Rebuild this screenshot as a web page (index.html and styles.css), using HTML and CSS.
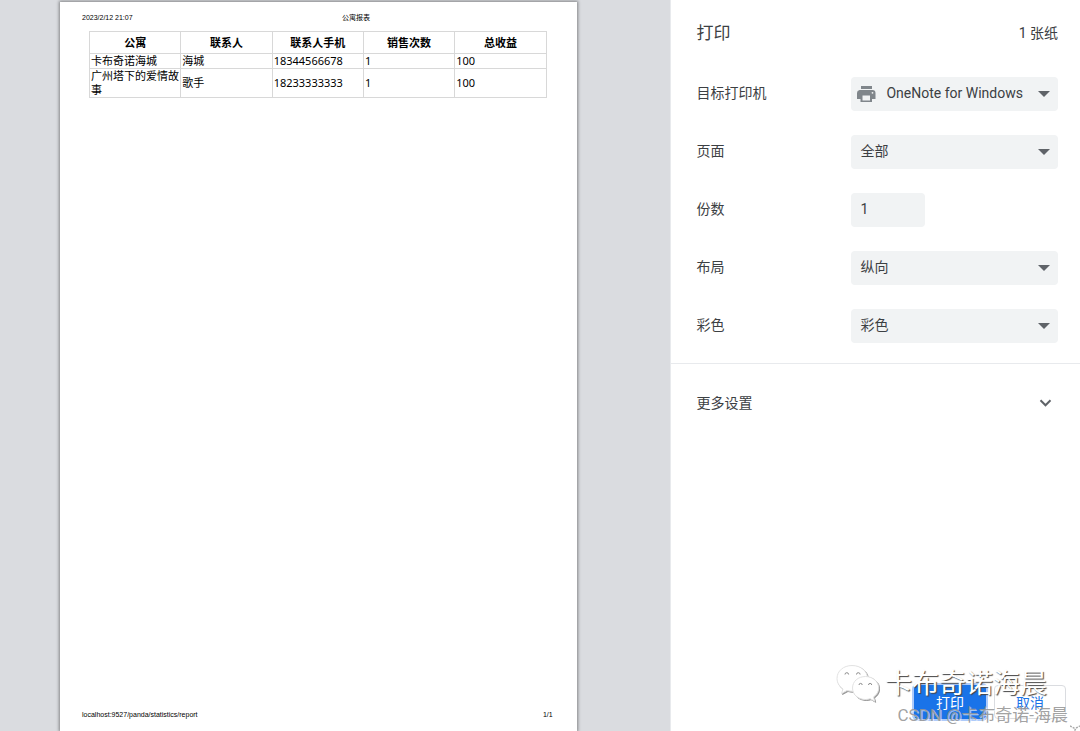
FILE: index.html
```html
<!DOCTYPE html>
<html lang="zh-CN">
<head>
  <meta charset="UTF-8" />
  <meta name="viewport" content="width=device-width, initial-scale=1.0" />
  <title>打印</title>
  <link rel="stylesheet" href="styles.css">
</head>
<body>
  <main class="preview">
    <div class="paper">
      <div class="paper-header">
        <span>2023/2/12 21:07</span>
        <span class="paper-title">公寓报表</span>
      </div>

      <div class="paper-body">
        <table class="report">
          <thead>
            <tr>
              <th>公寓</th>
              <th>联系人</th>
              <th>联系人手机</th>
              <th>销售次数</th>
              <th>总收益</th>
            </tr>
          </thead>
          <tbody>
            <tr>
              <td>卡布奇诺海城</td>
              <td>海城</td>
              <td>18344566678</td>
              <td>1</td>
              <td>100</td>
            </tr>
            <tr>
              <td>广州塔下的爱情故事</td>
              <td>歌手</td>
              <td>18233333333</td>
              <td>1</td>
              <td>100</td>
            </tr>
          </tbody>
        </table>
      </div>

      <div class="paper-footer">
        <span>localhost:9527/panda/statistics/report</span>
        <span>1/1</span>
      </div>
    </div>
  </main>

  <form class="panel">
    <div class="panel-header">
      <h1>打印</h1>
      <span class="sheets">1 张纸</span>
    </div>

    <div class="settings">
      <div class="row">
        <label for="printer">目标打印机</label>
        <div class="select-wrap with-icon">
          <svg class="printer-icon" viewBox="0 0 20 18" aria-hidden="true">
            <path d="M5 1h11v3H5zM3.500 5h13A3 3 0 0 1 19.500 8v6H16v3H4.500v-3H1V8a3 3 0 0 1 2.500-3z" fill="#80868b"/>
            <path d="M6.500 10.500h7.500v5H6.500z" fill="#f1f3f4"/>
            <circle cx="16.500" cy="7.800" r="0.900" fill="#f1f3f4"/>
          </svg>
          <select id="printer"><option>OneNote for Windows</option></select>
        </div>
      </div>
      <div class="row">
        <label for="pages">页面</label>
        <div class="select-wrap">
          <select id="pages"><option>全部</option></select>
        </div>
      </div>
      <div class="row">
        <label for="copies">份数</label>
        <div class="field">
          <input id="copies" type="text" inputmode="numeric" value="1">
        </div>
      </div>
      <div class="row">
        <label for="layout">布局</label>
        <div class="select-wrap">
          <select id="layout"><option>纵向</option><option>横向</option></select>
        </div>
      </div>
      <div class="row">
        <label for="color">彩色</label>
        <div class="select-wrap">
          <select id="color"><option>彩色</option><option>黑白</option></select>
        </div>
      </div>
    </div>

    <button type="button" class="more">
      <span>更多设置</span>
      <svg viewBox="0 0 12 8" aria-hidden="true"><path d="M1 1.300l5 5 5-5" fill="none" stroke="#5f6368" stroke-width="2"/></svg>
    </button>

    <div class="actions">
      <button type="submit" class="btn btn-print">打印</button>
      <button type="button" class="btn btn-cancel">取消</button>
    </div>

    <div class="watermark">
      <svg class="wechat" viewBox="0 0 44 40" aria-hidden="true">
        <g fill="#fff" stroke="#e2e2e2" stroke-width="1">
          <path class="bubble" d="M16 1.500C7.500 1.500 1 7 1 14.500c0 4.500 2.500 8 6 10.500l-1.500 4.500 5.500-3c2 .6 4 .8 6 .8 8 0 14.500-5.500 14.500-12.800S25 1.500 16 1.500z"/>
          <path class="bubble" d="M29.500 12.500c-7.500 0-13 5-13 11.500s5.500 11.500 13 11.500c1.600 0 3.200-.3 4.600-.8l4.600 2.600-1.200-4.300c3.200-2.200 5.200-5.300 5.200-9 0-6.500-6-11.500-13.200-11.500z"/>
        </g>
        <path d="M9 10.500a1.800 1.800 0 0 1 3.600 0M20.500 10.500a1.800 1.800 0 0 1 3.600 0M23 21a1.600 1.600 0 0 1 3.200 0M32.500 21a1.600 1.600 0 0 1 3.200 0" fill="none" stroke="#8c8c8c"/>
      </svg>
      <span>卡布奇诺海晨</span>
    </div>
    <div class="csdn">CSDN @卡布奇诺-海晨</div>
    <svg class="corner" viewBox="0 0 10 6" aria-hidden="true"><path d="M0 1l4 2 1 2 1-2 4-2" fill="none" stroke="#aaa" stroke-width="1.500" stroke-dasharray="2 1"/></svg>
  </form>
</body>
</html>
```

FILE: styles.css
```css
* {
  box-sizing: border-box;
}

body {
  margin: 0;
  display: flex;
  min-height: 100vh;
  font-family: Roboto, "Noto Sans CJK SC", sans-serif;
  font-size: 14px;
  color: #3c4043;
  background: #fff;
}

/* preview */
.preview {
  flex: 1;
  display: flex;
  padding: 2px 93px 0 60px;
  background: #dadce0;
}

.paper {
  flex: 1;
  display: flex;
  flex-direction: column;
  padding: 11px 0 11px;
  background: #fff;
  box-shadow: 0 0 3px 1px rgba(0, 0, 0, 0.4);
  color: #000;
}

.paper-header,
.paper-footer {
  display: flex;
  padding-left: 22px;
  font-family: "Liberation Sans", "Noto Sans CJK SC", sans-serif;
  font-size: 7px;
  line-height: 10px;
}

.paper-title {
  flex: 1;
  padding-left: 3px;
  text-align: center;
}

.paper-body {
  padding: 8px 30px 0 29px;
}

.paper-footer {
  justify-content: space-between;
  margin-top: auto;
  padding-right: 24px;
}

.report {
  width: 100%;
  border-collapse: collapse;
  table-layout: fixed;
  font-family: "Noto Sans", "Noto Sans CJK SC", sans-serif;
  font-size: 11px;
  line-height: 14px;
}

.report th,
.report td {
  border: 1px solid #d8d8d8;
  padding: 0 0 0 1px;
  text-align: left;
}

.report th {
  padding: 4px 0 3px;
  text-align: center;
}

/* settings panel */
.panel {
  position: relative;
  width: 38%;
  display: flex;
  flex-direction: column;
  border-left: 1px solid #e8eaed;
}

.panel-header {
  display: flex;
  align-items: center;
  justify-content: space-between;
  padding: 20px 22px 0 26px;
  line-height: 26px;
}

.panel-header h1 {
  margin: 0;
  font-size: 17px;
  font-weight: 400;
}

.settings {
  display: flex;
  flex-direction: column;
  gap: 24px;
  padding: 31px 22px 20px 26px;
  border-bottom: 1px solid #e8eaed;
}

.row {
  display: flex;
  align-items: center;
}

.row label {
  flex: 3;
  line-height: 18px;
  padding-bottom: 2px;
}

.select-wrap,
.field {
  position: relative;
  flex: 4;
}

.select-wrap::after {
  content: "";
  position: absolute;
  right: 8px;
  top: 14px;
  border: 6px solid transparent;
  border-top-color: #5f6368;
  border-bottom: 0;
  pointer-events: none;
}

.row select,
.row input {
  display: block;
  width: 100%;
  height: 34px;
  padding: 0 9px 2px;
  border: 0;
  border-radius: 4px;
  background: #f1f3f4;
  color: #3c4043;
  font: inherit;
  appearance: none;
}

.row input {
  width: 74px;
}

.with-icon select {
  padding-left: 35px;
}

.printer-icon {
  position: absolute;
  left: 5px;
  top: 8px;
  width: 20px;
  height: 18px;
}

.more {
  display: flex;
  align-items: center;
  justify-content: space-between;
  padding: 27px 28px 28px 26px;
  border: 0;
  background: none;
  color: inherit;
  font: inherit;
  line-height: 24px;
}

.more svg {
  width: 13px;
  height: 8px;
}

.actions {
  display: flex;
  justify-content: flex-end;
  gap: 8px;
  margin-top: auto;
  padding: 0 14px 12px;
}

.btn {
  width: 72px;
  height: 34px;
  padding-bottom: 2px;
  border: 1px solid #dadce0;
  border-radius: 4px;
  background: #fff;
  color: #1a73e8;
  font: inherit;
}

.btn-print {
  border-color: #1a73e8;
  background: #1a73e8;
  color: #fff;
  box-shadow: 0 0 0 2px #aecbfa;
}

/* watermarks */
.watermark {
  position: absolute;
  right: 33px;
  bottom: 27px;
  display: flex;
  align-items: center;
  gap: 5px;
  color: #fff;
  font-size: 27px;
  line-height: 40px;
  text-shadow: 1px 1px 1px #444;
  pointer-events: none;
}

.wechat {
  width: 44px;
  height: 40px;
}

.bubble {
  filter: drop-shadow(1px 1px 0 #999);
}

.csdn {
  position: absolute;
  right: 12px;
  bottom: 4px;
  color: rgba(150, 150, 150, 0.9);
  font-size: 17px;
  line-height: 24px;
  text-shadow: 1px 1px 0 rgba(255, 255, 255, 0.6);
  pointer-events: none;
}

.corner {
  position: absolute;
  right: 0;
  bottom: 0;
  width: 10px;
  height: 6px;
}
```
